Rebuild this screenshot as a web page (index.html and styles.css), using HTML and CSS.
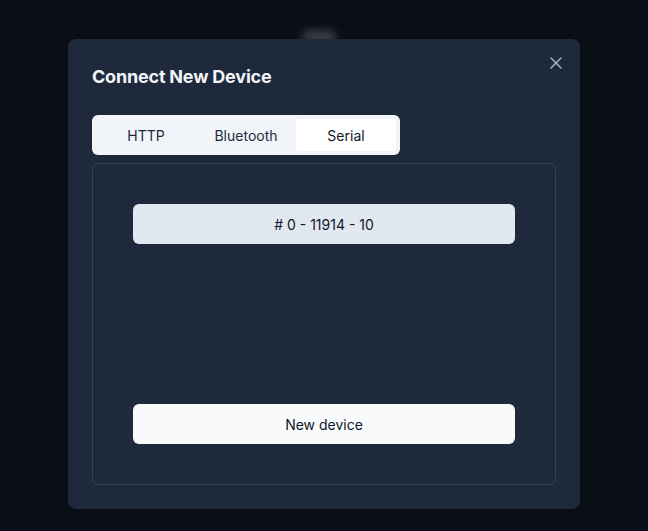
FILE: index.html
```html
<!DOCTYPE html>
<html>
<head>
<meta charset="utf-8">
<link rel="stylesheet" href="styles.css">
</head>
<body>
<div class="backdrop">
  <div class="glow"></div>
  <div class="modal">
    <button class="close" aria-label="Close">
      <svg width="12" height="12" viewBox="0 0 12 12" fill="none" stroke="currentColor" stroke-width="1.4" stroke-linecap="round"><path d="M1 1L11 11M11 1L1 11"/></svg>
    </button>
    <h2 class="title">Connect New Device</h2>
    <div class="tabs">
      <div class="tab">HTTP</div>
      <div class="tab">Bluetooth</div>
      <div class="tab active">Serial</div>
    </div>
    <div class="panel">
      <div class="device">#&nbsp;0 - 11914 - 10</div>
      <div class="new">New device</div>
    </div>
  </div>
</div>
</body>
</html>
```
FILE: styles.css
```css
* { box-sizing: border-box; }
html, body { margin: 0; padding: 0; }
body {
  width: 648px;
  height: 531px;
  background: #0a0e17;
  font-family: Inter, "Noto Sans", sans-serif;
  overflow: hidden;
}
.backdrop {
  position: relative;
  width: 648px;
  height: 531px;
  padding-top: 39px;
  display: flex;
  justify-content: center;
  align-items: flex-start;
}
.glow {
  position: absolute;
  left: 302px;
  top: 30px;
  width: 34px;
  height: 14px;
  border-radius: 7px;
  background: #3a3d44;
  filter: blur(4px);
}
.modal {
  position: relative;
  width: 512px;
  height: 470px;
  background: #1e293b;
  border-radius: 8px;
  padding: 24px;
  display: flex;
  flex-direction: column;
}
.close {
  position: absolute;
  top: 18px;
  right: 18px;
  background: none;
  border: 0;
  padding: 0;
  width: 12px;
  height: 12px;
  color: #b4bcc8;
  display: flex;
}
.title {
  margin: 0;
  font-size: 18px;
  line-height: 28px;
  font-weight: 700;
  color: #f1f5f9;
  letter-spacing: -0.2px;
}
.tabs {
  margin-top: 24px;
  align-self: flex-start;
  display: flex;
  padding: 4px;
  background: #f1f5f9;
  border-radius: 6px;
}
.tab {
  width: 100px;
  height: 32px;
  display: flex;
  align-items: center;
  justify-content: center;
  font-size: 14px;
  font-weight: 400;
  color: #1e293b;
  border-radius: 4px;
}
.tab.active { background: #ffffff; color: #0f172a; }
.panel {
  margin-top: 8px;
  height: 323px;
  border: 1px solid #334155;
  border-radius: 6px;
  padding: 40px;
  display: flex;
  flex-direction: column;
  justify-content: space-between;
}
.device, .new {
  height: 40px;
  border-radius: 6px;
  display: flex;
  align-items: center;
  justify-content: center;
  font-size: 14px;
  font-weight: 400;
  color: #0f172a;
}
.device { background: #e2e8f0; }
.new { background: #f8fafc; }
```
